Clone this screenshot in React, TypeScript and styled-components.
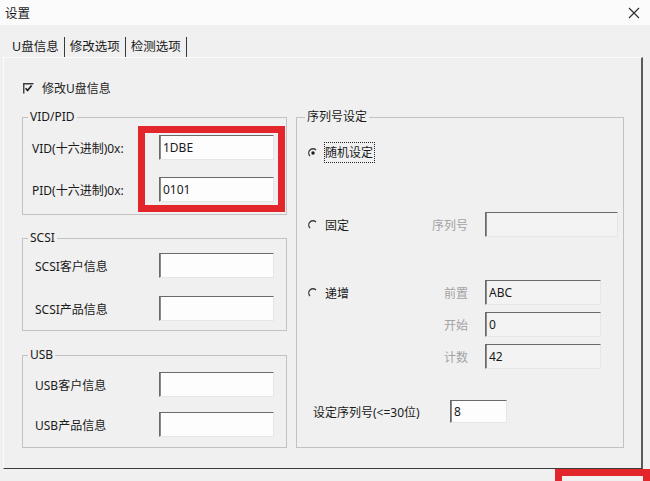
import React from "react";
import styled, { createGlobalStyle } from "styled-components";

const Global = createGlobalStyle`
  html, body { margin: 0; padding: 0; background: #f0f0f0; }
  body {
    font-family: "Noto Sans", "Noto Sans CJK SC", sans-serif;
    font-size: 12px;
    color: #1f1f1f;
  }
  * { box-sizing: border-box; }
`;

const Window = styled.div`
  position: relative;
  width: 650px;
  height: 481px;
  overflow: hidden;
  display: flex;
  flex-direction: column;
  background: #f0f0f0;
`;

const TitleBar = styled.div`
  height: 25px;
  flex: none;
  background: #fbfbfb;
  display: flex;
  align-items: center;
  justify-content: space-between;
  padding: 0 10px 0 5px;
  font-size: 12.5px;
  color: #1a1a1a;
`;

const Body = styled.div`
  flex: 1;
  display: flex;
  flex-direction: column;
  padding: 10px 7px 0 3px;
`;

const TabStrip = styled.div`
  height: 22px;
  display: flex;
  align-items: flex-end;
  padding-left: 4px;
`;

const Tab = styled.div`
  height: 20px;
  padding: 0 5px 3px;
  display: flex;
  align-items: center;
  font-size: 12.5px;
  border-right: 1px solid #3a3a3a;
  color: #1a1a1a;
`;

const Panel = styled.div`
  height: 412px;
  border-top: 1px solid #fbfbfb;
  border-left: 1px solid #fbfbfb;
  border-right: 2px solid #5a5a5a;
  border-bottom: 1px solid #3c3c3c;
  padding: 0 17px 19px 18px;
  display: flex;
  flex-direction: column;
`;

const CheckRow = styled.div`
  margin-top: 22px;
  height: 16px;
  display: flex;
  align-items: center;
  gap: 8px;
  padding-left: 1px;
`;

const Columns = styled.div`
  margin-top: 13px;
  display: grid;
  grid-template-columns: 265px 328px;
  column-gap: 9px;
  align-items: start;
`;

const LeftCol = styled.div`
  display: flex;
  flex-direction: column;
`;

const Group = styled.fieldset<{ $pt: number; $pb: number; $gap: number; $mt?: number }>`
  margin: ${(p) => p.$mt ?? 0}px 0 0 0;
  min-width: 0;
  border: 1px solid #c2c2c2;
  padding: ${(p) => p.$pt}px 12px ${(p) => p.$pb}px 8px;
  display: flex;
  flex-direction: column;
  gap: ${(p) => p.$gap}px;
`;

const Legend = styled.legend`
  font-size: 12px;
  line-height: 16px;
  padding: 0 2px;
  margin-left: -3px;
  color: #1a1a1a;
`;

const FieldRow = styled.div`
  display: grid;
  grid-template-columns: 1fr 115px;
  align-items: center;
  height: 25px;
`;

const FieldLabel = styled.span<{ $indent?: number }>`
  padding-left: ${(p) => p.$indent ?? 0}px;
  white-space: nowrap;
  color: #1a1a1a;
`;

const TextBox = styled.input<{ $w: number; $h?: number; $off?: boolean }>`
  width: ${(p) => p.$w}px;
  height: ${(p) => p.$h ?? 25}px;
  margin: 0;
  border: 1px solid;
  border-color: #6a6a6a #e6e6e6 #e6e6e6 #6a6a6a;
  box-shadow: inset 1px 0 0 #8a8a8a;
  background: ${(p) => (p.$off ? "#f3f3f3" : "#fdfdfd")};
  font-family: inherit;
  font-size: 12px;
  color: #1a1a1a;
  padding: 0 3px;
  outline: none;
`;

const RightGroup = styled.fieldset`
  margin: 0;
  min-width: 0;
  height: 339px;
  border: 1px solid #c2c2c2;
  padding: 0 5px 0 11px;
  display: flex;
  flex-direction: column;
`;

const RadioRow = styled.div<{ $mt: number }>`
  margin-top: ${(p) => p.$mt}px;
  display: flex;
  align-items: center;
  height: 21px;
`;

const OptionRow = styled.div<{ $mt: number }>`
  margin-top: ${(p) => p.$mt}px;
  display: grid;
  grid-template-columns: 113px 47px auto;
  align-items: center;
  height: 25px;
`;

const RadioCell = styled.div`
  display: flex;
  align-items: center;
  gap: 7px;
`;

const OptionText = styled.span`
  color: #1a1a1a;
`;

const FocusText = styled.span`
  border: 1px dotted #222;
  line-height: 19px;
  padding: 0 1px 0 0;
  margin-left: 6px;
  color: #1a1a1a;
`;

const SideLabel = styled.span`
  text-align: right;
  color: #a3a3a3;
`;

const InputCell = styled.div`
  padding-left: 17px;
  display: flex;
`;

const SetRow = styled.div`
  margin-top: 31px;
  display: flex;
  align-items: center;
  height: 23px;
`;

const SetLabel = styled.span`
  width: 142px;
  padding-left: 5px;
  white-space: nowrap;
  color: #1a1a1a;
`;

const Highlight = styled.div<{ $l: number; $t: number; $w: number; $h: number }>`
  position: absolute;
  left: ${(p) => p.$l}px;
  top: ${(p) => p.$t}px;
  width: ${(p) => p.$w}px;
  height: ${(p) => p.$h}px;
  border: 7px solid #e3262b;
  pointer-events: none;
`;

const Radio = ({ checked }: { checked?: boolean }) => (
  <svg width="10" height="10" viewBox="0 0 10 10" style={{ flex: "none" }}>
    <path d="M8 2 A4.24 4.24 0 0 0 2 8" stroke="#3c3c3c" strokeWidth="1.3" fill="none" />
    {checked && <circle cx="5" cy="5" r="1.7" fill="#1e1e1e" />}
  </svg>
);

const CheckBox = () => (
  <svg width="11" height="11" viewBox="0 0 11 11" style={{ flex: "none" }}>
    <path d="M0.75 10.5 V0.75 H10.5" stroke="#3c3c3c" strokeWidth="1.4" fill="none" />
    <path d="M2.6 5.2 L4.6 7.6 L8.6 2.6" stroke="#1e1e1e" strokeWidth="1.6" fill="none" />
  </svg>
);

const CloseIcon = () => (
  <svg width="12" height="12" viewBox="0 0 12 12">
    <path d="M1 1 L11 11 M11 1 L1 11" stroke="#2a2a2a" strokeWidth="1.1" />
  </svg>
);

export default function App() {
  return (
    <>
      <Global />
      <Window>
        <TitleBar>
          <span>设置</span>
          <CloseIcon />
        </TitleBar>
        <Body>
          <TabStrip>
            <Tab>U盘信息</Tab>
            <Tab>修改选项</Tab>
            <Tab>检测选项</Tab>
          </TabStrip>
          <Panel>
            <CheckRow>
              <CheckBox />
              <span>修改U盘信息</span>
            </CheckRow>
            <Columns>
              <LeftCol>
                <Group $pt={10} $pb={12} $gap={17}>
                  <Legend>VID/PID</Legend>
                  <FieldRow>
                    <FieldLabel $indent={1}>VID(十六进制)0x:</FieldLabel>
                    <TextBox $w={115} readOnly value="1DBE" />
                  </FieldRow>
                  <FieldRow>
                    <FieldLabel $indent={1}>PID(十六进制)0x:</FieldLabel>
                    <TextBox $w={115} readOnly value="0101" />
                  </FieldRow>
                </Group>
                <Group $pt={7} $pb={9} $gap={18} $mt={15}>
                  <Legend>SCSI</Legend>
                  <FieldRow>
                    <FieldLabel $indent={4}>SCSI客户信息</FieldLabel>
                    <TextBox $w={115} readOnly value="" />
                  </FieldRow>
                  <FieldRow>
                    <FieldLabel $indent={4}>SCSI产品信息</FieldLabel>
                    <TextBox $w={115} readOnly value="" />
                  </FieldRow>
                </Group>
                <Group $pt={9} $pb={10} $gap={15} $mt={16}>
                  <Legend>USB</Legend>
                  <FieldRow>
                    <FieldLabel $indent={4}>USB客户信息</FieldLabel>
                    <TextBox $w={115} readOnly value="" />
                  </FieldRow>
                  <FieldRow>
                    <FieldLabel $indent={4}>USB产品信息</FieldLabel>
                    <TextBox $w={115} readOnly value="" />
                  </FieldRow>
                </Group>
              </LeftCol>
              <RightGroup>
                <Legend>序列号设定</Legend>
                <RadioRow $mt={17}>
                  <Radio checked />
                  <FocusText>随机设定</FocusText>
                </RadioRow>
                <OptionRow $mt={49}>
                  <RadioCell>
                    <Radio />
                    <OptionText>固定</OptionText>
                  </RadioCell>
                  <SideLabel>序列号</SideLabel>
                  <InputCell>
                    <TextBox $w={133} $off readOnly value="" />
                  </InputCell>
                </OptionRow>
                <OptionRow $mt={43}>
                  <RadioCell>
                    <Radio />
                    <OptionText>递增</OptionText>
                  </RadioCell>
                  <SideLabel>前置</SideLabel>
                  <InputCell>
                    <TextBox $w={116} $off readOnly value="ABC" />
                  </InputCell>
                </OptionRow>
                <OptionRow $mt={7}>
                  <RadioCell />
                  <SideLabel>开始</SideLabel>
                  <InputCell>
                    <TextBox $w={116} $off readOnly value="0" />
                  </InputCell>
                </OptionRow>
                <OptionRow $mt={7}>
                  <RadioCell />
                  <SideLabel>计数</SideLabel>
                  <InputCell>
                    <TextBox $w={116} $off readOnly value="42" />
                  </InputCell>
                </OptionRow>
                <SetRow>
                  <SetLabel>设定序列号(&lt;=30位)</SetLabel>
                  <TextBox $w={57} $h={23} readOnly value="8" />
                </SetRow>
              </RightGroup>
            </Columns>
          </Panel>
        </Body>
        <Highlight $l={138} $t={126} $w={147} $h={86} />
        <Highlight $l={555} $t={469} $w={95} $h={40} />
      </Window>
    </>
  );
}
